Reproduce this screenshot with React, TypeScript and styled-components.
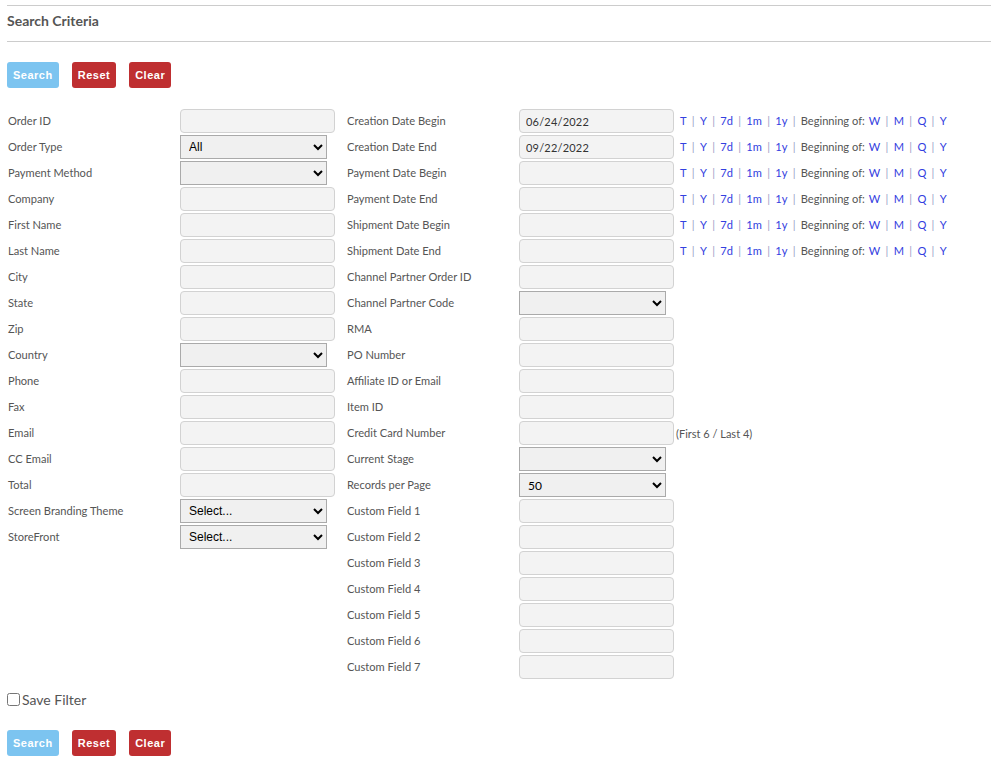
import styled, { createGlobalStyle } from "styled-components";

const GlobalStyle = createGlobalStyle`
  body {
    margin: 0;
    background: #fff;
    font-family: Lato, "Open Sans", sans-serif;
    color: #555;
  }
`;

type Field =
  | { label: string; kind: "input"; value?: string; dateLinks?: boolean; hint?: string }
  | { label: string; kind: "select"; options: string[] };

const leftFields: Field[] = [
  { label: "Order ID", kind: "input" },
  { label: "Order Type", kind: "select", options: ["All"] },
  { label: "Payment Method", kind: "select", options: [""] },
  { label: "Company", kind: "input" },
  { label: "First Name", kind: "input" },
  { label: "Last Name", kind: "input" },
  { label: "City", kind: "input" },
  { label: "State", kind: "input" },
  { label: "Zip", kind: "input" },
  { label: "Country", kind: "select", options: [""] },
  { label: "Phone", kind: "input" },
  { label: "Fax", kind: "input" },
  { label: "Email", kind: "input" },
  { label: "CC Email", kind: "input" },
  { label: "Total", kind: "input" },
  { label: "Screen Branding Theme", kind: "select", options: ["Select..."] },
  { label: "StoreFront", kind: "select", options: ["Select..."] },
];

const rightFields: Field[] = [
  { label: "Creation Date Begin", kind: "input", value: "06/24/2022", dateLinks: true },
  { label: "Creation Date End", kind: "input", value: "09/22/2022", dateLinks: true },
  { label: "Payment Date Begin", kind: "input", dateLinks: true },
  { label: "Payment Date End", kind: "input", dateLinks: true },
  { label: "Shipment Date Begin", kind: "input", dateLinks: true },
  { label: "Shipment Date End", kind: "input", dateLinks: true },
  { label: "Channel Partner Order ID", kind: "input" },
  { label: "Channel Partner Code", kind: "select", options: [""] },
  { label: "RMA", kind: "input" },
  { label: "PO Number", kind: "input" },
  { label: "Affiliate ID or Email", kind: "input" },
  { label: "Item ID", kind: "input" },
  { label: "Credit Card Number", kind: "input", hint: "(First 6 / Last 4)" },
  { label: "Current Stage", kind: "select", options: [""] },
  { label: "Records per Page", kind: "select", options: ["50"] },
  { label: "Custom Field 1", kind: "input" },
  { label: "Custom Field 2", kind: "input" },
  { label: "Custom Field 3", kind: "input" },
  { label: "Custom Field 4", kind: "input" },
  { label: "Custom Field 5", kind: "input" },
  { label: "Custom Field 6", kind: "input" },
  { label: "Custom Field 7", kind: "input" },
];

const quick = ["T", "Y", "7d", "1m", "1y"];
const beginning = ["W", "M", "Q", "Y"];

const DateLinks = () => (
  <Links>
    {quick.map((q) => (
      <span key={q}>
        <LinkText>{q}</LinkText>
        <Sep>|</Sep>
      </span>
    ))}
    <Plain>Beginning of:</Plain>
    {beginning.map((b, i) => (
      <span key={b + i}>
        {i > 0 && <Sep>|</Sep>}
        <LinkText>{b}</LinkText>
      </span>
    ))}
  </Links>
);

const FieldRow = ({ field }: { field: Field }) => (
  <Row>
    <Label>{field.label}</Label>
    <Control>
      {field.kind === "input" ? (
        <>
          <TextInput type="text" defaultValue={field.value ?? ""} />
          {field.hint && <Hint>{field.hint}</Hint>}
          {field.dateLinks && <DateLinks />}
        </>
      ) : (
        <Select $lato={field.options[0] === "50"} defaultValue={field.options[0]}>
          {field.options.map((o) => (
            <option key={o}>{o}</option>
          ))}
        </Select>
      )}
    </Control>
  </Row>
);

const Buttons = ({ top }: { top: number }) => (
  <ButtonBar $top={top}>
    <Button $variant="primary">Search</Button>
    <Button $variant="danger">Reset</Button>
    <Button $variant="danger">Clear</Button>
  </ButtonBar>
);

export default function App() {
  return (
    <>
      <GlobalStyle />
      <Page>
        <Header>Search Criteria</Header>
        <Buttons top={20} />
        <Columns>
          <Column>
            {leftFields.map((f) => (
              <FieldRow key={f.label} field={f} />
            ))}
          </Column>
          <Column>
            {rightFields.map((f) => (
              <FieldRow key={f.label} field={f} />
            ))}
          </Column>
        </Columns>
        <SaveFilter>
          <input type="checkbox" />
          Save Filter
        </SaveFilter>
        <Buttons top={22} />
      </Page>
    </>
  );
}

const Page = styled.div`
  padding: 5px 0 0 7px;
`;

const Header = styled.div`
  border-top: 1px solid #ccc;
  border-bottom: 1px solid #ccc;
  height: 35px;
  line-height: 30px;
  font-size: 14px;
  font-weight: bold;
  color: #555;
`;

const ButtonBar = styled.div<{ $top: number }>`
  display: flex;
  gap: 13px;
  margin-top: ${(p) => p.$top}px;
`;

const Button = styled.button<{ $variant: "primary" | "danger" }>`
  height: 26px;
  padding: 0 6px;
  border: none;
  border-radius: 3px;
  background: ${(p) => (p.$variant === "primary" ? "#7cc4f0" : "#bf2f31")};
  color: #fff;
  font-family: "Liberation Sans", Arial, sans-serif;
  font-size: 11px;
  font-weight: bold;
  letter-spacing: 0.5px;
  cursor: pointer;
`;

const Columns = styled.div`
  display: flex;
  margin-top: 20px;
  padding-left: 1px;
`;

const Column = styled.div`
  display: flex;
  flex-direction: column;
  width: 339px;
`;

const Row = styled.div`
  display: flex;
  align-items: center;
  height: 26px;
`;

const Label = styled.div`
  width: 172px;
  flex-shrink: 0;
  font-size: 11.1px;
  line-height: 14px;
  color: #555;
`;

const Control = styled.div`
  display: flex;
  align-items: center;
  white-space: nowrap;
`;

const TextInput = styled.input`
  box-sizing: border-box;
  width: 155px;
  height: 24px;
  margin: 0;
  padding: 0 6px;
  border: 1px solid #d2d2d2;
  border-radius: 4px;
  background: #f3f3f3;
  font-family: Lato, sans-serif;
  font-size: 11px;
  letter-spacing: 0.2px;
  color: #333;
  outline: none;
`;

const Select = styled.select<{ $lato: boolean }>`
  box-sizing: border-box;
  width: 147px;
  height: 24px;
  margin: 0;
  padding: 0 4px;
  border: 1px solid #aaa;
  border-radius: 0;
  background-color: #f0f0f0;
  font-family: ${(p) => (p.$lato ? "Lato" : '"Liberation Sans", Arial')}, sans-serif;
  font-size: 12px;
  color: #000;
`;

const Hint = styled.span`
  margin-left: 2px;
  font-size: 11px;
  color: #555;
`;

const Links = styled.div`
  display: flex;
  align-items: center;
  margin-left: 6px;
  margin-bottom: 1px;
  font-size: 11.1px;
  line-height: 14px;
`;

const LinkText = styled.a`
  color: #3340e0;
  cursor: pointer;
`;

const Sep = styled.span`
  color: #9aa0c8;
  padding: 0 5.3px;
`;

const Plain = styled.span`
  color: #555;
  margin-right: 4px;
`;

const SaveFilter = styled.label`
  display: flex;
  align-items: center;
  gap: 2px;
  margin-top: 11px;
  font-size: 14px;
  color: #555;

  input {
    margin: 0;
    width: 13px;
    height: 13px;
  }
`;
